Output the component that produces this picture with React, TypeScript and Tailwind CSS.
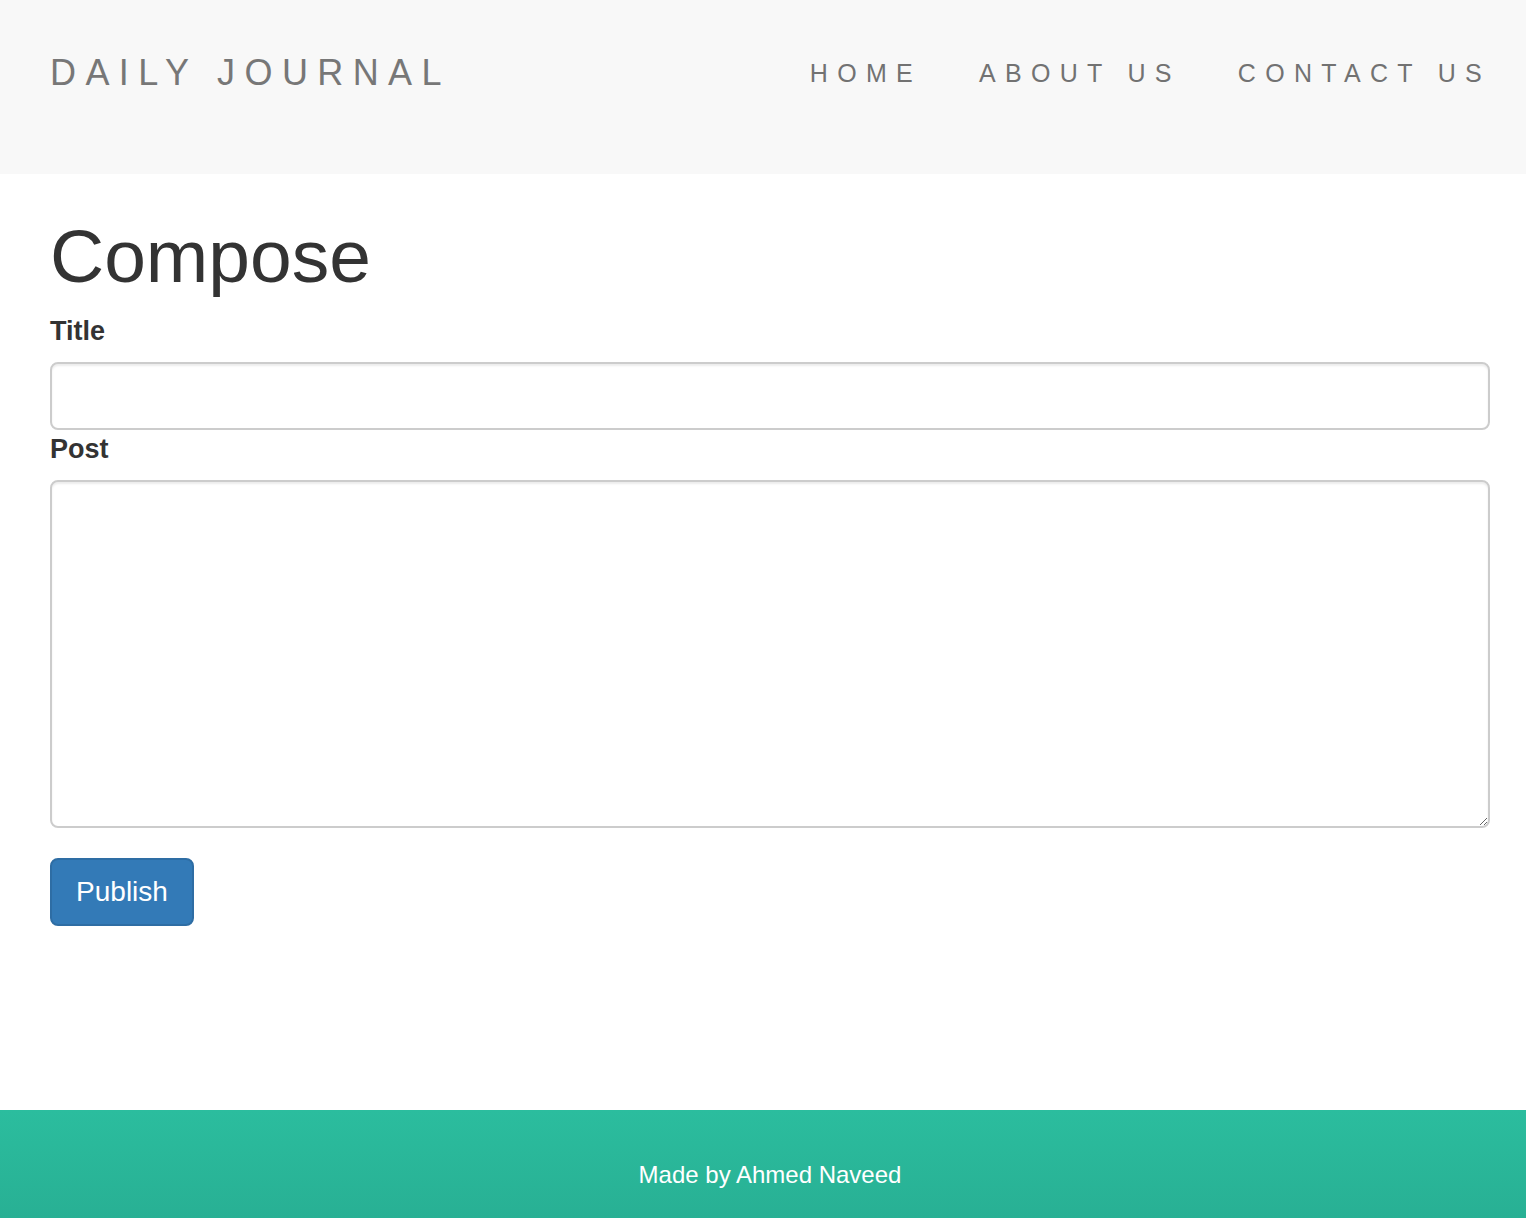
import React from "react";

const navLinks = ["HOME", "ABOUT US", "CONTACT US"];

const App = () => {
  return (
    <div className="min-h-screen flex flex-col bg-white text-[#333] font-['Liberation_Sans',Arial,sans-serif]">
      <nav className="h-[174px] bg-[#f8f8f8] flex justify-between items-start pl-[50px] pr-[35px]">
        <a
          href="#"
          className="mt-[55px] text-[36px] leading-[36px] tracking-[9.4px] text-[#777] whitespace-nowrap"
        >
          DAILY JOURNAL
        </a>
        <ul className="mt-[61px] flex gap-[57px]">
          {navLinks.map((link) => (
            <li key={link}>
              <a
                href="#"
                className="text-[25px] leading-[25px] tracking-[9.3px] text-[#727272] whitespace-nowrap"
              >
                {link}
              </a>
            </li>
          ))}
        </ul>
      </nav>

      <main className="flex-1 pl-[50px] pr-[36px] pt-[41px]">
        <h1 className="text-[75px] leading-[1.1] text-[#333]">Compose</h1>
        <form onSubmit={(e) => e.preventDefault()}>
          <label className="block mt-[14px] mb-[12px] text-[27px] leading-[38px] font-bold">
            Title
          </label>
          <input
            type="text"
            className="block w-full h-[68px] border-2 border-[#ccc] rounded-[8px] px-6 text-[28px] shadow-[inset_0_2px_2px_rgba(0,0,0,0.075)] outline-none"
          />
          <label className="block mb-[12px] text-[27px] leading-[38px] font-bold">
            Post
          </label>
          <textarea className="block w-full h-[348px] border-2 border-[#ccc] rounded-[8px] px-6 py-3 text-[28px] shadow-[inset_0_2px_2px_rgba(0,0,0,0.075)] outline-none" />
          <button
            type="submit"
            className="mt-[30px] w-[144px] h-[68px] bg-[#337ab7] border-2 border-[#2e6da4] rounded-[8px] text-white text-[28px] leading-none"
          >
            Publish
          </button>
        </form>
      </main>

      <footer className="h-[108px] pt-[53px] pl-[14px] text-center text-white text-[24px] leading-[24px] bg-gradient-to-b from-[#2bbd9e] to-[#28b094]">
        Made by Ahmed Naveed
      </footer>
    </div>
  );
};

export default App;
